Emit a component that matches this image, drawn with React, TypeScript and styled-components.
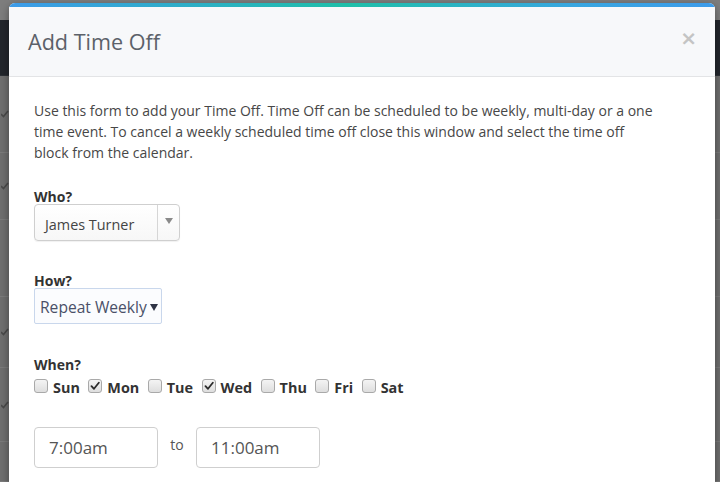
import React from "react";
import styled, { createGlobalStyle } from "styled-components";

const Global = createGlobalStyle`
  html, body { margin: 0; padding: 0; }
  body { width: 720px; height: 482px; overflow: hidden; font-family: "Open Sans", "Noto Sans", sans-serif; }
  * { box-sizing: border-box; }
`;

const Page = styled.div`
  position: relative;
  width: 720px;
  height: 482px;
  overflow: hidden;
  background: #6f6f6f;
  display: flex;
  flex-direction: column;
`;

const TopStrip = styled.div`
  height: 20px;
  background: #7d7d7d;
`;

const NavBar = styled.div`
  height: 57px;
  background: #22262c;
  border-bottom: 1px solid #2c3036;
`;

const BgRow = styled.div<{ $h: number }>`
  height: ${(p) => p.$h}px;
  border-bottom: 1px solid #7b7b7b;
  display: flex;
  align-items: center;
  padding-left: 1px;
  color: #5a5a5a;
  font-size: 12px;
`;

const Modal = styled.div`
  position: absolute;
  left: 9px;
  top: 3px;
  width: 706px;
  height: 520px;
  background: #fff;
  border-radius: 6px;
  overflow: hidden;
  box-shadow: 0 3px 9px rgba(0, 0, 0, 0.4);
  display: flex;
  flex-direction: column;
`;

const TopBar = styled.div`
  height: 4px;
  background: linear-gradient(90deg, #3d9be9 0%, #1fbfa8 48%, #38a6e0 80%, #3d9be9 100%);
`;

const Header = styled.div`
  height: 70px;
  background: #f7f8fa;
  border-bottom: 1px solid #e3e4e6;
  display: flex;
  align-items: center;
  justify-content: space-between;
  padding: 0 18px 0 19px;
`;

const Title = styled.h4`
  margin: 0;
  font-size: 21.6px;
  font-weight: 400;
  color: #5c6169;
`;

const Close = styled.span`
  font-family: "DejaVu Sans", sans-serif;
  font-size: 20px;
  font-weight: 700;
  color: #c4c4c4;
  line-height: 1;
  margin-top: -8px;
`;

const Body = styled.div`
  padding: 23px 25px 0 25px;
  display: flex;
  flex-direction: column;
  color: #454545;
`;

const Intro = styled.p`
  margin: 0;
  font-size: 14px;
  line-height: 21px;
  color: #474747;
  width: 622px;
`;

const Label = styled.div<{ $mt: number }>`
  margin-top: ${(p) => p.$mt}px;
  padding-top: 3px;
  margin-bottom: -3px;
  font-size: 14px;
  font-weight: 700;
  line-height: 20px;
  color: #333;
`;

const WhoSelect = styled.div`
  width: 146px;
  height: 37px;
  border: 1px solid #cfcfcf;
  border-radius: 4px;
  background: linear-gradient(#ffffff, #f7f7f7);
  box-shadow: 0 1px 1px rgba(0, 0, 0, 0.06);
  display: flex;
  align-items: stretch;
`;

const WhoText = styled.span`
  flex: 1;
  display: flex;
  align-items: center;
  padding: 4px 0 0 10px;
  font-size: 14.4px;
  color: #444;
  border-right: 1px solid #d6d6d6;
`;

const WhoArrow = styled.span`
  width: 21px;
  display: flex;
  align-items: center;
  justify-content: center;
  padding-bottom: 4px;
`;

const HowSelect = styled.div`
  width: 128px;
  height: 36px;
  border: 1px solid #c9d7ec;
  border-radius: 2px;
  background: #fbfcfe;
  display: flex;
  align-items: center;
  padding: 2px 0 0 5px;
  gap: 3px;
  font-size: 15.6px;
  color: #4a5068;
  white-space: nowrap;
`;

const Days = styled.div`
  display: flex;
  align-items: center;
  margin-top: 5px;
  height: 20px;
`;

const Day = styled.label`
  display: flex;
  align-items: center;
  margin-right: 8.5px;
  font-size: 14.4px;
  font-weight: 700;
  color: #333;
`;

const Box = styled.span`
  width: 14px;
  height: 14px;
  border: 1px solid #a9a9a9;
  border-radius: 3px;
  background: linear-gradient(#f4f4f4, #dedede);
  margin-right: 5px;
  margin-top: -3px;
  display: flex;
  align-items: center;
  justify-content: center;
`;

const TimeRow = styled.div`
  display: flex;
  align-items: center;
  margin-top: 30px;
`;

const TimeInput = styled.div`
  width: 124px;
  height: 41px;
  border: 1px solid #cfcfcf;
  border-radius: 4px;
  background: #fff;
  display: flex;
  align-items: center;
  padding-left: 14px;
  font-size: 17px;
  color: #555;
`;

const To = styled.span`
  width: 38px;
  text-align: center;
  font-size: 14px;
  color: #555;
  margin-top: -6px;
`;

const Check = () => (
  <svg width="10" height="10" viewBox="0 0 10 10">
    <path d="M1.5 5.2 L4 7.8 L8.8 1.8" fill="none" stroke="#2b2b2b" strokeWidth="1.8" strokeLinecap="round" strokeLinejoin="round" />
  </svg>
);

const BgCheck = () => (
  <svg width="8" height="8" viewBox="0 0 8 8">
    <path d="M0 4 L2.5 6.5 L7 1" fill="none" stroke="#4a4a4a" strokeWidth="1.6" />
  </svg>
);

const days: [string, boolean][] = [
  ["Sun", false],
  ["Mon", true],
  ["Tue", false],
  ["Wed", true],
  ["Thu", false],
  ["Fri", false],
  ["Sat", false],
];

const rows = [
  { h: 78, c: true },
  { h: 67, c: true },
  { h: 78, c: false },
  { h: 72, c: true },
  { h: 75, c: true },
  { h: 40, c: false },
];

export default function App() {
  return (
    <>
      <Global />
      <Page>
        <TopStrip />
        <NavBar />
        {rows.map((r, i) => (
          <BgRow key={i} $h={r.h}>
            {r.c && <BgCheck />}
          </BgRow>
        ))}
        <Modal>
          <TopBar />
          <Header>
            <Title>Add Time Off</Title>
            <Close>×</Close>
          </Header>
          <Body>
            <Intro>
              Use this form to add your Time Off. Time Off can be scheduled to be weekly, multi-day or a one
              time event. To cancel a weekly scheduled time off close this window and select the time off
              block from the calendar.
            </Intro>
            <Label $mt={21}>Who?</Label>
            <WhoSelect>
              <WhoText>James Turner</WhoText>
              <WhoArrow>
                <svg width="8" height="6" viewBox="0 0 8 6">
                  <path d="M0 0 H8 L4 6 Z" fill="#8a8a8a" />
                </svg>
              </WhoArrow>
            </WhoSelect>
            <Label $mt={27}>How?</Label>
            <HowSelect>
              Repeat Weekly
              <svg width="8" height="7" viewBox="0 0 8 7">
                <path d="M0 0 H8 L4 7 Z" fill="#2e3345" />
              </svg>
            </HowSelect>
            <Label $mt={28}>When?</Label>
            <Days>
              {days.map(([d, on]) => (
                <Day key={d}>
                  <Box>{on && <Check />}</Box>
                  {d}
                </Day>
              ))}
            </Days>
            <TimeRow>
              <TimeInput>7:00am</TimeInput>
              <To>to</To>
              <TimeInput>11:00am</TimeInput>
            </TimeRow>
          </Body>
        </Modal>
      </Page>
    </>
  );
}
